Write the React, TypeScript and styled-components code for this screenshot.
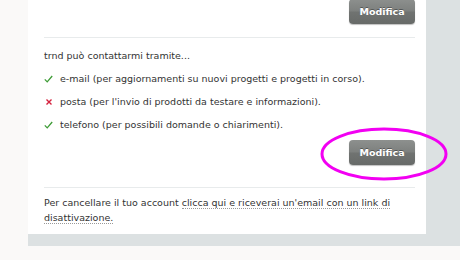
import React from "react";
import styled, { createGlobalStyle } from "styled-components";

const GlobalStyle = createGlobalStyle`
  html, body {
    margin: 0;
    padding: 0;
    background: #faf9f8;
  }
  body {
    font-family: "DejaVu Sans", Verdana, sans-serif;
    font-size: 9.5px;
    color: #333;
  }
`;

const Page = styled.div`
  position: relative;
  display: flex;
  padding-left: 28px;
  width: 460px;
  box-sizing: border-box;
`;

const Panel = styled.div`
  flex: 1;
  background: #dce1e2;
  padding: 0 34px 12px 0;
`;

const Card = styled.div`
  background: #fff;
  padding: 0 11px 0 16px;
  height: 235px;
  box-sizing: border-box;
`;

const ButtonRow = styled.div<{ $top?: number }>`
  display: flex;
  justify-content: flex-end;
  margin-top: ${(p) => p.$top ?? 0}px;
`;

const Button = styled.button`
  width: 66px;
  height: 25px;
  border: none;
  border-radius: 4px;
  background: linear-gradient(#8d908e 0%, #7d807e 48%, #707371 52%, #676a68 100%);
  box-shadow: 0 1px 1px rgba(0, 0, 0, 0.25);
  color: #fff;
  font-family: "DejaVu Sans", Verdana, sans-serif;
  font-size: 9.5px;
  font-weight: bold;
  text-shadow: 0 -1px 0 rgba(0, 0, 0, 0.35);
  padding: 0;
  cursor: pointer;
`;

const Divider = styled.hr<{ $top: number }>`
  border: none;
  border-top: 1px solid #e8ebec;
  margin: ${(p) => p.$top}px 0 0 0;
`;

const Intro = styled.p`
  margin: 11px 0 0 0;
  line-height: 14px;
`;

const List = styled.ul`
  list-style: none;
  margin: 9px 0 0 0;
  padding: 0;
  display: flex;
  flex-direction: column;
  gap: 9px;
`;

const Item = styled.li`
  display: flex;
  align-items: center;
  gap: 7px;
  line-height: 14px;
`;

const Mark = styled.span`
  width: 9px;
  display: inline-flex;
  justify-content: center;
`;

const Note = styled.p`
  margin: 7px 0 0 0;
  line-height: 15px;
`;

const Link = styled.a`
  color: #333;
  text-decoration: none;
  border-bottom: 1px dotted #999;
`;

const Ring = styled.svg`
  position: absolute;
  left: 318px;
  top: 125px;
  pointer-events: none;
`;

const items = [
  { ok: true, text: "e-mail (per aggiornamenti su nuovi progetti e progetti in corso)." },
  { ok: false, text: "posta (per l'invio di prodotti da testare e informazioni)." },
  { ok: true, text: "telefono (per possibili domande o chiarimenti)." },
];

const Check = () => (
  <svg width="9" height="8" viewBox="0 0 9 8">
    <path d="M0.8 4.4 L3.2 6.9 L8.2 1" fill="none" stroke="#3d9b35" strokeWidth="1.3" />
  </svg>
);

const Cross = () => (
  <svg width="8" height="8" viewBox="0 0 8 8">
    <path d="M1.5 1.5 L6.5 6.5 M6.5 1.5 L1.5 6.5" fill="none" stroke="#d4213d" strokeWidth="1.4" />
  </svg>
);

export default function App() {
  return (
    <>
      <GlobalStyle />
      <Page>
        <Panel>
          <Card>
            <ButtonRow $top={-1}>
              <Button>Modifica</Button>
            </ButtonRow>
            <Divider $top={13} />
            <Intro>trnd può contattarmi tramite...</Intro>
            <List>
              {items.map((it) => (
                <Item key={it.text}>
                  <Mark>{it.ok ? <Check /> : <Cross />}</Mark>
                  {it.text}
                </Item>
              ))}
            </List>
            <ButtonRow $top={8}>
              <Button>Modifica</Button>
            </ButtonRow>
            <Divider $top={22} />
            <Note>
              Per cancellare il tuo account{" "}
              <Link href="#">clicca qui e riceverai un'email con un link di disattivazione.</Link>
            </Note>
          </Card>
        </Panel>
        <Ring width="132" height="58" viewBox="0 0 132 58">
          <ellipse cx="66" cy="29" rx="62" ry="25" fill="none" stroke="#f200f2" strokeWidth="3" />
        </Ring>
      </Page>
    </>
  );
}
